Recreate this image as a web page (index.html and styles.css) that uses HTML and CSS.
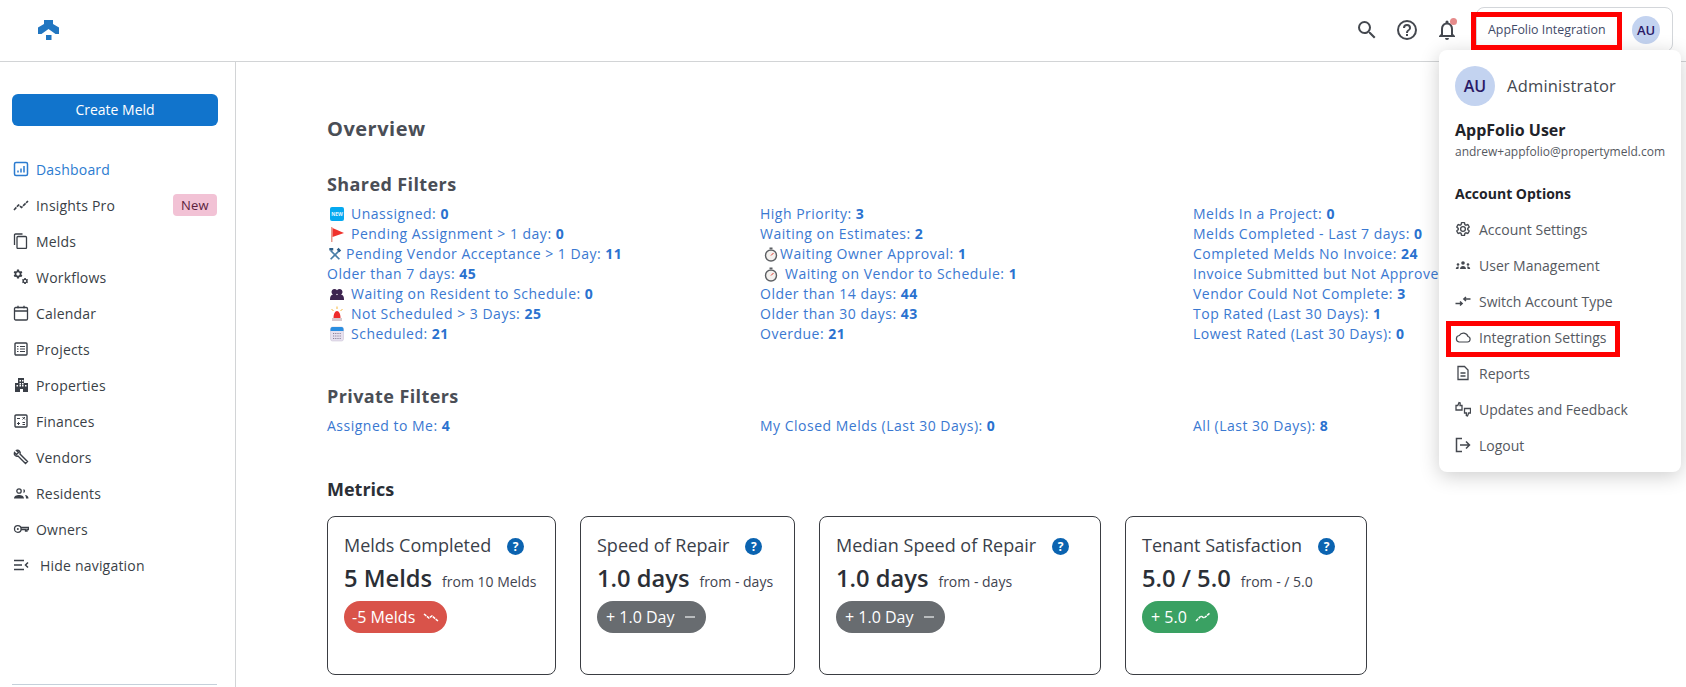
FILE: index.html
```html
<!DOCTYPE html>
<html lang="en">
<head>
<meta charset="utf-8">
<title>Property Meld</title>
<link rel="stylesheet" href="styles.css">
</head>
<body>
<header class="topbar">
  <svg class="logo" viewBox="0 0 21 20"><path fill="#2176c1" d="M6 0H15V4L21 7.500V14H17.500L10.500 9 3.500 14H0V7.500L6 4Z"/><rect fill="#2176c1" x="8" y="15" width="5.500" height="5"/></svg>
  <div class="top-actions">
    <svg class="top-icon" viewBox="0 0 24 24"><path fill="#44484f" d="M15.500 14h-.79l-.28-.27A6.471 6.471 0 0 0 16 9.500 6.500 6.500 0 1 0 9.500 16c1.610 0 3.090-.59 4.230-1.570l.27.28v.79l5 4.990L20.490 19l-4.990-5zm-6 0C7.010 14 5 11.990 5 9.500S7.010 5 9.500 5 14 7.010 14 9.500 11.990 14 9.500 14z"/></svg>
    <svg class="top-icon" viewBox="0 0 24 24"><path fill="#44484f" d="M11 18h2v-2h-2zm1-16a10 10 0 1 0 0 20 10 10 0 0 0 0-20zm0 18a8 8 0 1 1 0-16 8 8 0 0 1 0 16zm0-14a4 4 0 0 0-4 4h2a2 2 0 1 1 4 0c0 2-3 1.750-3 5h2c0-2.250 3-2.500 3-5a4 4 0 0 0-4-4z"/></svg>
    <span class="bell-wrap">
      <svg class="top-icon" viewBox="0 0 24 24"><path fill="#44484f" d="M12 22a2 2 0 0 0 2-2h-4a2 2 0 0 0 2 2zm6-6v-5c0-3.100-1.600-5.600-4.500-6.300V4a1.500 1.500 0 0 0-3 0v.7C7.600 5.400 6 7.900 6 11v5l-2 2v1h16v-1zm-2 1H8v-6c0-2.500 1.500-4.500 4-4.500s4 2 4 4.500z"/></svg>
      <i class="bell-dot"></i>
    </span>
    <div class="account-pill">
      <span class="org-name">AppFolio Integration</span>
      <span class="avatar small">AU</span>
    </div>
  </div>
</header>

<div class="layout">
  <aside class="sidebar">
    <button class="create-btn">Create Meld</button>
    <nav class="nav">
      <a class="nav-item active"><svg viewBox="0 0 16 16"><rect x="1.500" y="1.500" width="13" height="13" rx="1.500" fill="none" stroke="#2b7bd0" stroke-width="1.500"/><path stroke="#2b7bd0" stroke-width="1.500" d="M5 11.500V9.500M8 11.500V7.500M11 11.500V5"/></svg>Dashboard</a>
      <a class="nav-item"><svg viewBox="0 0 16 16"><path fill="none" stroke="#3a3f47" stroke-width="1.600" stroke-dasharray="3.500 .8" d="M1 13l4.500-5 3 2.500L15 4"/></svg>Insights Pro<span class="badge">New</span></a>
      <a class="nav-item"><svg viewBox="0 0 16 16"><path fill="none" stroke="#3a3f47" stroke-width="1.300" d="M1.500 12V2A1 1 0 0 1 2.500 1h7"/><rect x="4" y="3.500" width="9.500" height="12" rx="1" fill="none" stroke="#3a3f47" stroke-width="1.300"/></svg>Melds</a>
      <a class="nav-item"><svg viewBox="0 0 16 16"><g fill="#3a3f47"><path transform="translate(-.5 -.5) scale(.46)" d="M19.140 12.940c.04-.3.06-.61.06-.94 0-.32-.02-.64-.07-.94l2.030-1.580a.49.49 0 0 0 .12-.61l-1.920-3.320a.488.488 0 0 0-.59-.22l-2.390.96c-.5-.38-1.030-.7-1.620-.94l-.36-2.540a.484.484 0 0 0-.48-.41h-3.840c-.24 0-.43.170-.47.41l-.36 2.540c-.59.240-1.130.570-1.620.940l-2.390-.96c-.22-.08-.47 0-.59.220L2.740 8.870c-.12.210-.08.470.12.610l2.030 1.580c-.05.3-.09.630-.09.940s.02.640.07.940l-2.030 1.580a.49.49 0 0 0-.12.610l1.920 3.320c.12.220.37.290.59.220l2.390-.96c.5.38 1.030.7 1.620.94l.36 2.540c.05.240.24.410.48.410h3.840c.24 0 .44-.17.47-.41l.36-2.540c.59-.24 1.130-.56 1.620-.94l2.390.96c.22.08.47 0 .59-.22l1.920-3.320c.12-.22.07-.47-.12-.61l-2.010-1.580zM12 15.600c-1.980 0-3.600-1.620-3.600-3.600s1.620-3.600 3.600-3.600 3.600 1.620 3.600 3.600-1.620 3.600-3.600 3.600z"/><path transform="translate(8.200 8.200) scale(.32)" d="M19.140 12.940c.04-.3.06-.61.06-.94 0-.32-.02-.64-.07-.94l2.030-1.580a.49.49 0 0 0 .12-.61l-1.920-3.320a.488.488 0 0 0-.59-.22l-2.390.96c-.5-.38-1.030-.7-1.620-.94l-.36-2.540a.484.484 0 0 0-.48-.41h-3.840c-.24 0-.43.170-.47.41l-.36 2.540c-.59.240-1.130.570-1.620.940l-2.390-.96c-.22-.08-.47 0-.59.220L2.740 8.870c-.12.210-.08.470.12.610l2.030 1.580c-.05.3-.09.630-.09.940s.02.640.07.940l-2.030 1.580a.49.49 0 0 0-.12.610l1.920 3.320c.12.220.37.290.59.220l2.390-.96c.5.38 1.030.7 1.620.94l.36 2.540c.05.240.24.410.48.410h3.840c.24 0 .44-.17.47-.41l.36-2.540c.59-.24 1.130-.56 1.620-.94l2.390.96c.22.08.47 0 .59-.22l1.920-3.320c.12-.22.07-.47-.12-.61l-2.010-1.580zM12 15.600c-1.980 0-3.600-1.620-3.600-3.600s1.620-3.600 3.600-3.600 3.600 1.620 3.600 3.600-1.620 3.600-3.600 3.600z"/></g></svg>Workflows</a>
      <a class="nav-item"><svg viewBox="0 0 16 16"><rect x="1.500" y="2.500" width="13" height="12.500" rx="1.200" fill="none" stroke="#3a3f47" stroke-width="1.300"/><path stroke="#3a3f47" stroke-width="1.300" d="M1.500 6h13M5 .8v2.500M11 .8v2.500"/></svg>Calendar</a>
      <a class="nav-item"><svg viewBox="0 0 16 16"><rect x="2" y="2" width="12" height="12" rx="1" fill="none" stroke="#3a3f47" stroke-width="1.400"/><path stroke="#3a3f47" d="M4 5.500h1.500M7 5.500h5M4 8h1.500M7 8h5M4 10.500h1.500M7 10.500h5"/></svg>Projects</a>
      <a class="nav-item"><svg viewBox="0 0 16 16"><path fill="#3a3f47" fill-rule="evenodd" d="M5 1h6v5h4v9h-5v-3H7v3H2V6h3zM6.500 3v1.500H8V3zm2.500 0v1.500h1.500V3zM6.500 6v1.500H8V6zM9 6v1.500h1.500V6zM3.500 8v1.500H5V8zm3 0v1.500H8V8zM9 8v1.500h1.500V8zm3 0v1.500h1.500V8z"/></svg>Properties</a>
      <a class="nav-item"><svg viewBox="0 0 16 16"><rect x="2" y="2" width="12" height="12" rx="1" fill="none" stroke="#3a3f47" stroke-width="1.400"/><path stroke="#3a3f47" d="M4 5.500h3M9.500 4l2.500 2.500M12 4L9.500 6.500M4 10.500h3M5.500 9v3M9.500 9.500H12M9.500 11.500H12"/></svg>Finances</a>
      <a class="nav-item"><svg viewBox="0 0 16 16"><path fill="none" stroke="#3a3f47" stroke-width="1.400" d="M1.500 3.500L3.500 5.500 5.500 3.500 3.500 1.500C5.500.7 8 2.500 7 5l7.500 7.500-2 2L5 7C2.500 8 .7 5.500 1.500 3.500z"/></svg>Vendors</a>
      <a class="nav-item"><svg viewBox="0 0 16 16"><circle cx="6" cy="6" r="2.200" fill="none" stroke="#3a3f47" stroke-width="1.300"/><path fill="#3a3f47" d="M1 13.500c0-2.500 2.500-3.500 5-3.500s5 1 5 3.500zM10.500 4a2.200 2.200 0 0 1 0 4.200zM12 10c2 .3 3.500 1.300 3.500 3.500H13c0-1.500-.3-2.500-1-3.500z"/></svg>Residents</a>
      <a class="nav-item"><svg viewBox="0 0 16 16"><circle cx="4.800" cy="8" r="3.300" fill="none" stroke="#3a3f47" stroke-width="1.300"/><circle cx="4.800" cy="8" r="1" fill="#3a3f47"/><path fill="none" stroke="#3a3f47" stroke-width="1.300" d="M8 6.500h7.500V8.500H14v1.500h-1.500V8.500H8"/></svg>Owners</a>
      <a class="nav-item hide-nav"><svg viewBox="0 0 16 16"><path stroke="#3a3f47" stroke-width="1.500" fill="none" d="M1 3.500h10M1 8h8M1 12.500h10M15 5.500L12.500 8l2.500 2.500"/></svg>Hide navigation</a>
    </nav>
    <div class="side-rule"></div>
  </aside>

  <main class="content">
    <h1 class="page-title">Overview</h1>

    <h2 class="section-title">Shared Filters</h2>
    <div class="filter-grid">
      <ul class="filter-col">
        <li><svg class="emoji gap" viewBox="0 0 16 16"><rect x="1" y="1" width="14" height="14" rx="2" fill="#05a9f0"/><text x="8" y="10" text-anchor="middle" class="emoji-new">NEW</text></svg>Unassigned: <b>0</b></li>
        <li><svg class="emoji gap" viewBox="0 0 16 16"><rect x="2" y="1" width="1.500" height="15" fill="#e89a8c"/><path fill="#f0322c" d="M3.500 2L15 7 3.500 11z"/></svg>Pending Assignment &gt; 1 day: <b>0</b></li>
        <li><svg class="emoji tight" viewBox="0 0 16 16"><path stroke="#4a7fa8" stroke-width="2" d="M3 14L13 4M13 14L3 4"/><path stroke="#2f5f88" stroke-width="3" d="M1.500 2.500L6 2.500M11 2l3 3"/></svg>Pending Vendor Acceptance &gt; 1 Day: <b>11</b></li>
        <li>Older than 7 days: <b>45</b></li>
        <li><svg class="emoji gap" viewBox="0 0 16 16"><path fill="#3d2450" d="M1 14c0-4 1-5 3-5.500a3 3 0 1 1 3 0c1 .2 1 .5 1 1 0-.5 0-.8 1-1a3 3 0 1 1 3 0c2 .5 3 1.500 3 5.500z"/></svg>Waiting on Resident to Schedule: <b>0</b></li>
        <li><svg class="emoji gap" viewBox="0 0 16 16"><path fill="#ee2b2b" d="M4.500 12c0-4 1.500-7 3.500-7s3.500 3 3.500 7z"/><rect x="3" y="12" width="10" height="3" fill="#d8c8cc"/><path stroke="#f6b73c" d="M8 .5v2.500M2.500 3l2 2M13.500 3l-2 2"/></svg>Not Scheduled &gt; 3 Days: <b>25</b></li>
        <li><svg class="emoji gap" viewBox="0 0 16 16"><rect x="1.500" y="1" width="13" height="14" rx="2" fill="#e6e0ee" stroke="#c7bfd2" stroke-width=".5"/><path fill="#2a8ee0" d="M1.500 3a2 2 0 0 1 2-2h9a2 2 0 0 1 2 2v2h-13z"/><path stroke="#8b8199" stroke-dasharray="1.200 1" d="M4 7.500h8M4 10h8M4 12.500h8"/></svg>Scheduled: <b>21</b></li>
      </ul>
      <ul class="filter-col">
        <li>High Priority: <b>3</b></li>
        <li>Waiting on Estimates: <b>2</b></li>
        <li><svg class="emoji watch" viewBox="0 0 16 16"><circle cx="8" cy="9.500" r="5.500" fill="#f4f1ee" stroke="#5c5f63" stroke-width="1.400"/><rect x="6.500" y="1.500" width="3" height="1.500" fill="#5c5f63"/><path stroke="#e0392f" d="M8 9.500l2.500-2.500"/></svg>Waiting Owner Approval: <b>1</b></li>
        <li><svg class="emoji watch gap" viewBox="0 0 16 16"><circle cx="8" cy="9.500" r="5.500" fill="#f4f1ee" stroke="#5c5f63" stroke-width="1.400"/><rect x="6.500" y="1.500" width="3" height="1.500" fill="#5c5f63"/><path stroke="#e0392f" d="M8 9.500l2.500-2.500"/></svg>Waiting on Vendor to Schedule: <b>1</b></li>
        <li>Older than 14 days: <b>44</b></li>
        <li>Older than 30 days: <b>43</b></li>
        <li>Overdue: <b>21</b></li>
      </ul>
      <ul class="filter-col">
        <li>Melds In a Project: <b>0</b></li>
        <li>Melds Completed - Last 7 days: <b>0</b></li>
        <li>Completed Melds No Invoice: <b>24</b></li>
        <li>Invoice Submitted but Not Approved: <b>2</b></li>
        <li>Vendor Could Not Complete: <b>3</b></li>
        <li>Top Rated (Last 30 Days): <b>1</b></li>
        <li>Lowest Rated (Last 30 Days): <b>0</b></li>
      </ul>
    </div>

    <h2 class="section-title private">Private Filters</h2>
    <div class="filter-grid">
      <ul class="filter-col"><li>Assigned to Me: <b>4</b></li></ul>
      <ul class="filter-col"><li>My Closed Melds (Last 30 Days): <b>0</b></li></ul>
      <ul class="filter-col"><li>All (Last 30 Days): <b>8</b></li></ul>
    </div>

    <h2 class="metrics-title">Metrics</h2>
    <div class="cards">
      <section class="card c1">
        <div class="card-title">Melds Completed<span class="help">?</span></div>
        <div class="card-value"><strong>5 Melds</strong><span>from 10 Melds</span></div>
        <div class="pill red">-5 Melds<svg viewBox="0 0 16 10"><path fill="none" stroke="#fff" stroke-width="1.500" stroke-dasharray="3 .7" d="M1 2l5 4 3-2 6 5"/></svg></div>
      </section>
      <section class="card c2">
        <div class="card-title">Speed of Repair<span class="help">?</span></div>
        <div class="card-value"><strong>1.0 days</strong><span>from - days</span></div>
        <div class="pill gray">+ 1.0 Day<svg viewBox="0 0 16 10"><path stroke="#d5d7d9" stroke-width="1.500" d="M3 5h10"/></svg></div>
      </section>
      <section class="card c3">
        <div class="card-title">Median Speed of Repair<span class="help">?</span></div>
        <div class="card-value"><strong>1.0 days</strong><span>from - days</span></div>
        <div class="pill gray">+ 1.0 Day<svg viewBox="0 0 16 10"><path stroke="#d5d7d9" stroke-width="1.500" d="M3 5h10"/></svg></div>
      </section>
      <section class="card c4">
        <div class="card-title">Tenant Satisfaction<span class="help">?</span></div>
        <div class="card-value"><strong>5.0 / 5.0</strong><span>from - / 5.0</span></div>
        <div class="pill green">+ 5.0<svg viewBox="0 0 16 10"><path fill="none" stroke="#fff" stroke-width="1.500" stroke-dasharray="3 .7" d="M1 9l5-5 3 2 6-5"/></svg></div>
      </section>
    </div>
  </main>
</div>

<div class="dropdown">
  <div class="dd-head"><span class="avatar large">AU</span><span class="dd-role">Administrator</span></div>
  <div class="dd-name">AppFolio User</div>
  <div class="dd-email">andrew+appfolio@propertymeld.com</div>
  <div class="dd-section">Account Options</div>
  <ul class="dd-list">
    <li><svg viewBox="0 0 24 24"><path fill="none" stroke="#44484f" stroke-width="2" d="M19.140 12.940c.04-.3.06-.61.06-.94 0-.32-.02-.64-.07-.94l2.030-1.580a.49.49 0 0 0 .12-.61l-1.920-3.320a.488.488 0 0 0-.59-.22l-2.390.96c-.5-.38-1.030-.7-1.620-.94l-.36-2.540a.484.484 0 0 0-.48-.41h-3.840c-.24 0-.43.170-.47.41l-.36 2.540c-.59.240-1.130.570-1.620.940l-2.390-.96c-.22-.08-.47 0-.59.220L2.740 8.870c-.12.210-.08.470.12.610l2.030 1.580c-.05.3-.09.630-.09.940s.02.640.07.940l-2.030 1.580a.49.49 0 0 0-.12.610l1.920 3.320c.12.220.37.290.59.220l2.390-.96c.5.38 1.030.7 1.620.94l.36 2.540c.05.240.24.410.48.410h3.840c.24 0 .44-.17.47-.41l.36-2.540c.59-.24 1.130-.56 1.620-.94l2.390.96c.22.08.47 0 .59-.22l1.920-3.320c.12-.22.07-.47-.12-.61l-2.010-1.580zM12 15.600c-1.980 0-3.600-1.620-3.600-3.600s1.620-3.600 3.600-3.600 3.600 1.620 3.600 3.600-1.620 3.600-3.600 3.600z"/></svg>Account Settings</li>
    <li><svg viewBox="0 0 16 16"><g fill="#44484f"><circle cx="8" cy="6" r="1.800"/><circle cx="3" cy="7.500" r="1.300"/><circle cx="13" cy="7.500" r="1.300"/><path d="M5 12c0-2 1.500-3 3-3s3 1 3 3zM.8 12c0-1.500 1-2.500 2.200-2.500.4 0 .8.100 1 .3-.4.600-.6 1.300-.6 2.200zM15.200 12c0-1.500-1-2.500-2.200-2.500-.4 0-.8.100-1 .3.400.6.600 1.300.6 2.200z"/></g></svg>User Management</li>
    <li><svg viewBox="0 0 16 16"><path fill="none" stroke="#44484f" stroke-width="1.400" d="M.5 10.500H7M5 8.500l2.200 2L5 12.500M15.500 6H9M11 4L8.800 6 11 8"/></svg>Switch Account Type</li>
    <li><svg viewBox="0 0 16 16"><path fill="none" stroke="#44484f" stroke-width="1.200" d="M4 13h8.500a2.800 2.800 0 0 0 .5-5.500A4.800 4.800 0 0 0 4.300 6.500 3.300 3.300 0 0 0 4 13z"/></svg>Integration Settings</li>
    <li><svg viewBox="0 0 16 16"><path fill="none" stroke="#44484f" stroke-width="1.300" d="M3 1.500h6.500L13 5v9.500H3zM5.500 8h5M5.500 11h5"/></svg>Reports</li>
    <li><svg viewBox="0 0 16 16"><path fill="none" stroke="#44484f" stroke-width="1.300" d="M1 4.500h1.800L4 1.500l1.200.5-.2 2.500h2v4.500H1zM9.500 7.500h6V12h-1.800L12.500 15l-1.200-.5.2-2.500h-2z"/></svg>Updates and Feedback</li>
    <li><svg viewBox="0 0 16 16"><path fill="none" stroke="#44484f" stroke-width="1.500" d="M7 1.500H1.500v13H7M5 8h9.500M11 4.500L14.500 8 11 11.500"/></svg>Logout</li>
  </ul>
</div>

<div class="mark mark-org"></div>
<div class="mark mark-integration"></div>
</body>
</html>
```

FILE: styles.css
```css
* { box-sizing: border-box; }
html, body { margin: 0; height: 687px; overflow: hidden; background: #fff; }
body { font-family: "Open Sans", "Noto Sans", sans-serif; font-size: 14px; color: #3a3f47; position: relative; }
ul { list-style: none; margin: 0; padding: 0; }
h1, h2 { margin: 0; }

.topbar { height: 62px; border-bottom: 1px solid #d2d4d6; display: flex; align-items: flex-start; justify-content: space-between; padding: 7px 13px 0 38px; }
.logo { width: 21px; height: 20px; margin-top: 13px; }
.top-actions { display: flex; align-items: center; height: 45px; }
.top-icon { width: 24px; height: 24px; display: block; }
.top-actions > .top-icon { margin-right: 16px; }
.bell-wrap { position: relative; margin-right: 17px; }
.bell-dot { position: absolute; left: 15px; top: 0; width: 7px; height: 7px; border-radius: 50%; background: #e68b8b; }
.account-pill { width: 197px; height: 45px; border: 1px solid #d3d6da; border-radius: 8px; display: flex; align-items: center; justify-content: space-between; padding: 0 12px 0 11px; }
.org-name { font-size: 12.400px; color: #3f4a68; }
.avatar { display: flex; align-items: center; justify-content: center; border-radius: 50%; background: #c3d3f0; color: #2a1a66; font-weight: 600; }
.avatar.small { width: 28px; height: 28px; font-size: 13px; }
.avatar.large { width: 40px; height: 40px; font-size: 16px; }

.layout { display: flex; height: 625px; }
.sidebar { width: 236px; flex: none; border-right: 1px solid #d2d4d6; padding: 32px 17px 0 12px; display: flex; flex-direction: column; }
.create-btn { height: 32px; width: 206px; padding: 0 0 2px; border: 0; border-radius: 6px; background: #1174cc; color: #fff; font: 400 14px "Open Sans", sans-serif; flex: none; }
.nav { margin-top: 25px; }
.nav-item { display: flex; align-items: center; height: 36px; width: 205px; color: #3a3f47; font-size: 14px; letter-spacing: .2px; }
.nav-item svg { width: 16px; height: 16px; margin-right: 7px; margin-left: 1px; flex: none; }
.nav-item.active { color: #2b7bd0; }
.nav-item.hide-nav svg { margin-right: 11px; }
.badge { margin-left: auto; width: 44px; height: 22px; display: flex; align-items: center; justify-content: center; background: #f2c2d5; color: #5c1f3d; border-radius: 4px; font-size: 13px; }
.side-rule { margin-top: auto; margin-bottom: 2px; height: 1px; background: #c5d0da; width: 205px; }

.content { flex: 1; padding: 55px 0 0 91px; min-width: 0; }
.page-title { font-size: 20px; line-height: 24px; font-weight: 700; color: #4a4e56; letter-spacing: .5px; }
.section-title { font-size: 18px; line-height: 24px; font-weight: 700; color: #4a4e56; letter-spacing: .4px; margin-top: 31px; }
.section-title.private { margin-top: 40px; }
.filter-grid { display: grid; grid-template-columns: repeat(3, 433px); margin-top: 8px; }
.filter-col li { display: flex; align-items: center; white-space: pre; height: 20px; line-height: 20px; color: #3a78d1; font-size: 14px; letter-spacing: .5px; }
.filter-col b { color: #2a72cf; font-weight: 700; }
.emoji { width: 16px; height: 16px; flex: none; margin: 0 4px 0 1px; }
.emoji-new { font-size: 5px; font-weight: 700; fill: #e6f6ff; letter-spacing: 0; }
.emoji.gap { margin-right: 6px; margin-left: 2px; }
.emoji.tight { margin: 0 4px 0 1px; width: 14px; height: 14px; }
.emoji.watch { margin: 0 1px 0 3px; }
.emoji.watch.gap { margin-right: 6px; }

.metrics-title { font-size: 18px; line-height: 24px; font-weight: 700; color: #2b2f36; margin-top: 41px; }
.cards { display: flex; gap: 24px; margin-top: 15px; }
.card { height: 159px; border: 1px solid #3a3d42; border-radius: 8px; padding: 15px 16px; }
.card.c1 { width: 229px; }
.card.c2 { width: 215px; }
.card.c3 { width: 282px; }
.card.c4 { width: 242px; }
.card-title { display: flex; align-items: center; font-size: 18px; line-height: 26px; color: #3a3f4a; }
.help { width: 17px; height: 17px; margin-left: 16px; margin-top: 3px; border-radius: 50%; background: #0b63b0; color: #fff; font-size: 12px; font-weight: 700; display: flex; align-items: center; justify-content: center; }
.card-value { display: flex; align-items: baseline; margin-top: 4px; line-height: 33px; }
.card-value strong { font-size: 23.700px; font-weight: 600; color: #2b2f36; }
.card-value span { font-size: 14px; color: #3f4450; margin-left: 10px; }
.pill { display: inline-flex; align-items: center; height: 32px; border-radius: 16px; padding: 0 8px; color: #fff; font-size: 16px; margin-top: 3px; }
.pill svg { width: 16px; height: 10px; margin-left: 8px; }
.pill.red { background: #d9534a; }
.pill.gray { background: #686c70; padding: 0 8px 0 9px; }
.pill.green { background: #3aa163; padding: 0 7px 0 9px; }

.dropdown { position: absolute; left: 1439px; top: 50px; width: 242px; height: 422px; background: #fff; border-radius: 8px; box-shadow: 0 4px 20px rgba(0,0,0,.2); padding: 16px; }
.dd-head { display: flex; align-items: center; }
.dd-role { font-size: 16.500px; color: #44484f; margin: -2px 0 0 12px; letter-spacing: .2px; }
.dd-name { font-size: 16px; font-weight: 700; color: #1f2329; line-height: 22px; margin-top: 13px; }
.dd-email { font-size: 12px; color: #55595f; line-height: 18px; margin-top: 2px; white-space: nowrap; }
.dd-section { font-size: 14px; font-weight: 700; color: #1f2329; line-height: 20px; margin-top: 23px; }
.dd-list { margin-top: 7px; }
.dd-list li { display: flex; align-items: center; height: 36px; font-size: 14px; color: #55595f; white-space: nowrap; }
.dd-list svg { width: 16px; height: 16px; margin-right: 8px; flex: none; }

.mark { position: absolute; border: 5px solid #f00; pointer-events: none; }
.mark-org { left: 1471px; top: 12px; width: 151px; height: 38px; }
.mark-integration { left: 1446px; top: 321px; width: 174px; height: 36px; }
```
